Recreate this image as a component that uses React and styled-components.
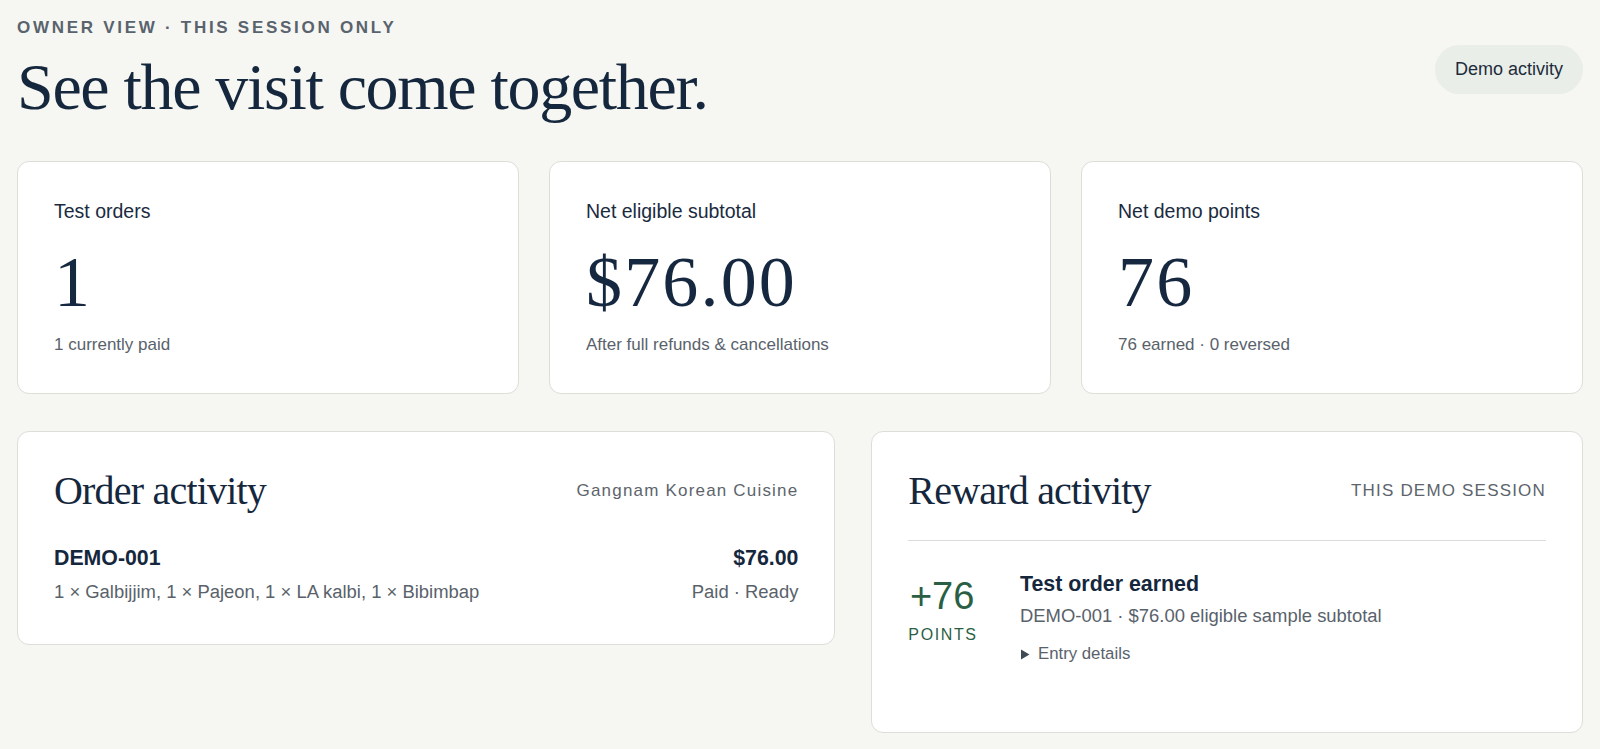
import React from "react";
import styled, { createGlobalStyle } from "styled-components";

const GlobalStyle = createGlobalStyle`
  html, body { margin: 0; padding: 0; }
  body {
    background: #f6f6f2;
    font-family: "Liberation Sans", Arial, sans-serif;
    color: #16283e;
    -webkit-font-smoothing: antialiased;
  }
  * { box-sizing: border-box; }
`;

const Page = styled.main`
  padding: 16px 17px 20px;
  display: flex;
  flex-direction: column;
`;

const Header = styled.header`
  display: flex;
  align-items: center;
  justify-content: space-between;
`;

const TitleBlock = styled.div`
  display: flex;
  flex-direction: column;
`;

const Eyebrow = styled.div`
  font-size: 17px;
  line-height: 24px;
  font-weight: 700;
  letter-spacing: 0.16em;
  color: #59636d;
  text-transform: uppercase;
`;

const Heading = styled.h1`
  margin: 11px 0 0;
  font-family: "Liberation Serif", "Times New Roman", serif;
  font-weight: 400;
  font-size: 66px;
  line-height: 72px;
  letter-spacing: -0.02em;
  color: #15273d;
`;

const Pill = styled.span`
  display: inline-flex;
  align-items: center;
  height: 49px;
  padding: 0 20px;
  border-radius: 999px;
  background: #e9eee9;
  font-size: 18px;
  color: #1d2c3b;
`;

const StatsGrid = styled.section`
  margin-top: 38px;
  display: grid;
  grid-template-columns: repeat(3, minmax(0, 1fr));
  gap: 30px;
`;

const Card = styled.div`
  background: #ffffff;
  border: 1px solid #dcded8;
  border-radius: 12px;
  padding: ${(p) => p.$pad || "35px 36px 36px"};
`;

const StatLabel = styled.div`
  font-size: 19.5px;
  line-height: 28px;
  color: #1a2b3f;
`;

const StatValue = styled.div`
  margin-top: 21px;
  font-family: "Liberation Serif", "Times New Roman", serif;
  font-size: 72px;
  line-height: 72px;
  letter-spacing: 0.03em;
  color: #15283f;
`;

const StatSub = styled.div`
  margin-top: 15px;
  font-size: 17px;
  line-height: 24px;
  color: #59626b;
`;

const ActivityGrid = styled.section`
  margin-top: 37px;
  display: grid;
  grid-template-columns: minmax(0, 1.15fr) minmax(0, 1fr);
  gap: 36px;
  align-items: start;
`;

const PanelHeader = styled.div`
  display: flex;
  align-items: center;
  justify-content: space-between;
  padding-bottom: ${(p) => (p.$divided ? "25px" : "0")};
  border-bottom: ${(p) => (p.$divided ? "1px solid #d9dcd8" : "none")};
`;

const PanelTitle = styled.h2`
  margin: 0;
  font-family: "Liberation Serif", "Times New Roman", serif;
  font-weight: 400;
  font-size: 40px;
  line-height: 48px;
  letter-spacing: -0.02em;
  color: #15273d;
`;

const PanelMeta = styled.span`
  font-size: 17px;
  letter-spacing: 0.07em;
  color: #5d646c;
`;

const OrderRow = styled.div`
  margin-top: 30px;
  display: flex;
  justify-content: space-between;
  align-items: flex-start;
  gap: 24px;
`;

const OrderCol = styled.div`
  display: flex;
  flex-direction: column;
  align-items: ${(p) => (p.$right ? "flex-end" : "flex-start")};
  text-align: ${(p) => (p.$right ? "right" : "left")};
`;

const OrderStrong = styled.div`
  font-size: 21.3px;
  line-height: 27px;
  font-weight: 700;
  color: #15273d;
`;

const OrderText = styled.div`
  margin-top: 6px;
  font-size: 18.45px;
  line-height: 27px;
  color: #59626b;
`;

const EntryRow = styled.div`
  padding: 30px 0 29px;
  display: grid;
  grid-template-columns: auto 1fr;
  column-gap: 44px;
  align-items: start;
`;

const PointsCol = styled.div`
  margin-top: 7px;
  display: flex;
  flex-direction: column;
  align-items: center;
  color: #2a5f45;
`;

const PointsValue = styled.div`
  font-size: 38px;
  line-height: 37px;
`;

const PointsLabel = styled.div`
  margin-top: 9px;
  font-size: 16px;
  line-height: 21px;
  letter-spacing: 0.1em;
  margin-right: -0.1em;
`;

const EntryBody = styled.div`
  display: flex;
  flex-direction: column;
`;

const EntryTitle = styled.div`
  font-size: 21.4px;
  line-height: 27px;
  font-weight: 700;
  color: #15273d;
`;

const EntryText = styled.div`
  margin-top: 4px;
  font-size: 18.45px;
  line-height: 27px;
  color: #59626b;
`;

const Details = styled.details`
  margin-top: 13px;
`;

const Summary = styled.summary`
  list-style: none;
  display: inline-flex;
  align-items: center;
  gap: 8px;
  font-size: 16.8px;
  line-height: 24px;
  color: #59626b;
  cursor: pointer;
  &::-webkit-details-marker { display: none; }
  svg { display: block; }
`;

const stats = [
  { label: "Test orders", value: "1", sub: "1 currently paid" },
  { label: "Net eligible subtotal", value: "$76.00", sub: "After full refunds & cancellations" },
  { label: "Net demo points", value: "76", sub: "76 earned · 0 reversed" },
];

export default function App() {
  return (
    <>
      <GlobalStyle />
      <Page>
        <Header>
          <TitleBlock>
            <Eyebrow>Owner view · This session only</Eyebrow>
            <Heading>See the visit come together.</Heading>
          </TitleBlock>
          <Pill>Demo activity</Pill>
        </Header>

        <StatsGrid>
          {stats.map((s) => (
            <Card key={s.label}>
              <StatLabel>{s.label}</StatLabel>
              <StatValue>{s.value}</StatValue>
              <StatSub>{s.sub}</StatSub>
            </Card>
          ))}
        </StatsGrid>

        <ActivityGrid>
          <Card $pad="35px 36px 39px">
            <PanelHeader>
              <PanelTitle>Order activity</PanelTitle>
              <PanelMeta>Gangnam Korean Cuisine</PanelMeta>
            </PanelHeader>
            <OrderRow>
              <OrderCol>
                <OrderStrong>DEMO-001</OrderStrong>
                <OrderText>1 × Galbijjim, 1 × Pajeon, 1 × LA kalbi, 1 × Bibimbap</OrderText>
              </OrderCol>
              <OrderCol $right>
                <OrderStrong>$76.00</OrderStrong>
                <OrderText>Paid · Ready</OrderText>
              </OrderCol>
            </OrderRow>
          </Card>

          <Card $pad="35px 36px 37px">
            <PanelHeader $divided>
              <PanelTitle>Reward activity</PanelTitle>
              <PanelMeta>THIS DEMO SESSION</PanelMeta>
            </PanelHeader>
            <EntryRow>
              <PointsCol>
                <PointsValue>+76</PointsValue>
                <PointsLabel>POINTS</PointsLabel>
              </PointsCol>
              <EntryBody>
                <EntryTitle>Test order earned</EntryTitle>
                <EntryText>DEMO-001 · $76.00 eligible sample subtotal</EntryText>
                <Details>
                  <Summary>
                    <svg width="10" height="11" viewBox="0 0 10 11" aria-hidden="true">
                      <path d="M1 0.5 L9.5 5.5 L1 10.5 Z" fill="#3f4954" />
                    </svg>
                    Entry details
                  </Summary>
                </Details>
              </EntryBody>
            </EntryRow>
          </Card>
        </ActivityGrid>
      </Page>
    </>
  );
}
